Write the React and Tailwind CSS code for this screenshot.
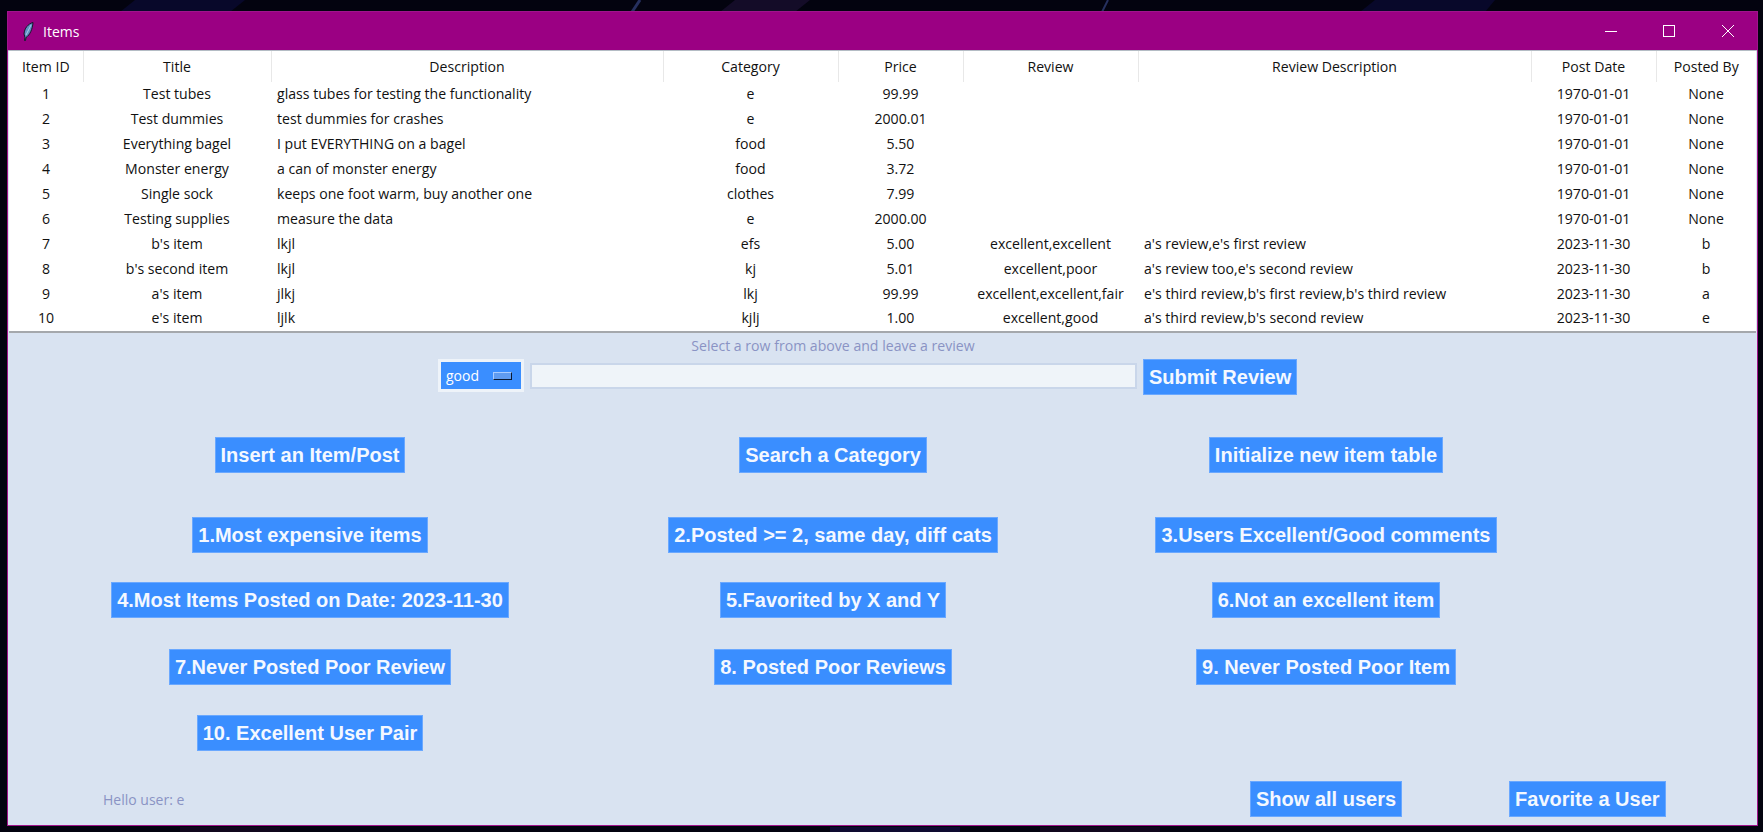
import React from 'react';

const columns = [
  { name: 'Item ID', width: 'w-[74px]' },
  { name: 'Title', width: 'w-[188px]' },
  { name: 'Description', width: 'w-[392px]' },
  { name: 'Category', width: 'w-[175px]' },
  { name: 'Price', width: 'w-[125px]' },
  { name: 'Review', width: 'w-[175px]' },
  { name: 'Review Description', width: 'w-[393px]' },
  { name: 'Post Date', width: 'w-[125px]' },
  { name: 'Posted By', width: 'w-[100px]' },
];

const rows = [
  ['1', 'Test tubes', 'glass tubes for testing the functionality', 'e', '99.99', '', '', '1970-01-01', 'None'],
  ['2', 'Test dummies', 'test dummies for crashes', 'e', '2000.01', '', '', '1970-01-01', 'None'],
  ['3', 'Everything bagel', 'I put EVERYTHING on a bagel', 'food', '5.50', '', '', '1970-01-01', 'None'],
  ['4', 'Monster energy', 'a can of monster energy', 'food', '3.72', '', '', '1970-01-01', 'None'],
  ['5', 'Single sock', 'keeps one foot warm, buy another one', 'clothes', '7.99', '', '', '1970-01-01', 'None'],
  ['6', 'Testing supplies', 'measure the data', 'e', '2000.00', '', '', '1970-01-01', 'None'],
  ['7', "b's item", 'lkjl', 'efs', '5.00', 'excellent,excellent', "a's review,e's first review", '2023-11-30', 'b'],
  ['8', "b's second item", 'lkjl', 'kj', '5.01', 'excellent,poor', "a's review too,e's second review", '2023-11-30', 'b'],
  ['9', "a's item", 'jlkj', 'lkj', '99.99', 'excellent,excellent,fair', "e's third review,b's first review,b's third review", '2023-11-30', 'a'],
  ['10', "e's item", 'ljlk', 'kjlj', '1.00', 'excellent,good', "a's third review,b's second review", '2023-11-30', 'e'],
];

const ActionButton = ({ children }) => (
  <button className="h-9 border border-[#6aa8ff] bg-[#3a8eff] px-[5px] font-['Liberation_Sans',Arial,sans-serif] text-[20px] font-bold whitespace-nowrap text-[#f4f8ff]">
    {children}
  </button>
);

const ButtonRow = ({ items, className }) => (
  <div className={`grid grid-cols-[602px_444px_542px] justify-items-center ${className}`}>
    {items.map((label, i) => (
      <div key={i} className="h-9">
        {label && <ActionButton>{label}</ActionButton>}
      </div>
    ))}
  </div>
);

const App = () => {
  return (
    <div className="relative flex h-[832px] w-[1763px] overflow-hidden bg-[#03030f] pt-[11px] pl-[7px] font-['Open_Sans',sans-serif]">
      {/* Wallpaper streaks showing round the window */}
      <svg viewBox="0 0 1763 832" className="absolute inset-0 h-full w-full" fill="none">
        <path d="M120 12L135 0h110l-15 12z" fill="#08082a" />
        <path d="M1360 12L1375 0h120l-10 12z" fill="#08082a" />
        <path d="M720 12L735 0h75l-15 12z" fill="#140c28" />
        <path d="M632 12L640 0" stroke="#26305e" strokeWidth="3" />
        <path d="M1102 12L1108 0" stroke="#26305e" strokeWidth="2" />
        <path d="M180 832h100v-5H180zM1040 832h120v-5h-120z" fill="#10061c" />
        <path d="M830 832h130v-5H830z" fill="#0e0a30" />
      </svg>

      <div className="relative flex h-[815px] w-[1751px] flex-col border border-[#a0148c] bg-[#9b0083]">
        {/* Title bar */}
        <div className="flex h-[38px] shrink-0 items-center pl-[15px] text-white">
          <svg viewBox="0 0 11 19" className="h-[19px] w-[11px]">
            <path d="M10 .5C5 2 1.500 6 1 12l1 3.500-.5 3h1l.5-3C7 13 9.500 7 10 .5z" fill="#5f8fc4" stroke="#141428" strokeWidth="1" />
            <path d="M8 3L3 13" stroke="#a9cbe8" strokeWidth="1" />
          </svg>
          <span className="ml-[9px] text-[14px]">Items</span>
          <div className="ml-auto flex items-center">
            <svg viewBox="0 0 12 12" className="h-3 w-3" fill="none" stroke="white" strokeWidth="1">
              <path d="M0 6.500h12" />
            </svg>
            <svg viewBox="0 0 12 12" className="ml-[46px] h-3 w-3" fill="none" stroke="white" strokeWidth="1">
              <rect x="0.500" y="0.500" width="11" height="11" />
            </svg>
            <svg viewBox="0 0 12 12" className="mr-[23px] ml-[47px] h-3 w-3" fill="none" stroke="white" strokeWidth="1">
              <path d="M0 0l12 12M12 0L0 12" />
            </svg>
          </div>
        </div>

        <div className="flex min-h-0 flex-1 flex-col border-t border-[#b4bcc4] bg-[#d9e3f1] pl-px">
          {/* Items table */}
          <table className="w-[1747px] table-fixed border-b-2 border-[#a5a8ac] bg-white text-[14.1px] text-[#111]">
            <thead>
              <tr className="h-[31px]">
                {columns.map((col) => (
                  <th key={col.name} className={`${col.width} border-r border-[#e8e8e8] text-center font-normal last:border-r-0`}>
                    {col.name}
                  </th>
                ))}
              </tr>
            </thead>
            <tbody>
              {rows.map((row) => (
                <tr key={row[0]} className="h-[25px]">
                  {row.map((cell, i) => (
                    <td key={i} className={`overflow-hidden pb-[2px] whitespace-nowrap ${i === 2 || i === 6 ? 'pl-[6px] text-left' : 'text-center'}`}>
                      {cell}
                    </td>
                  ))}
                </tr>
              ))}
            </tbody>
          </table>

          {/* Review form */}
          <p className="mt-[4px] ml-[602px] w-[444px] text-center text-[14.1px] leading-[18px] text-[#8a93c4]">
            Select a row from above and leave a review
          </p>
          <div className="mt-[4px] ml-[429px] flex items-center">
            <div className="mb-[3px] flex h-[33px] w-[86px] items-center border-[3px] border-[#eef3f9] bg-[#3a8eff] pl-[5px] text-[14px] text-white">
              good
              <span className="ml-[14px] h-2 w-[19px] border border-t-[#a9ccff] border-r-[#0a1a33] border-b-[#0a1a33] border-l-[#a9ccff] bg-[#5f9bf0]" />
            </div>
            <div className="mb-[2px] ml-[6px] h-[26px] w-[607px] border-2 border-[#c9d6ea] bg-[#eff4f9]" />
            <div className="ml-[6px]">
              <ActionButton>Submit Review</ActionButton>
            </div>
          </div>

          {/* Action buttons */}
          <ButtonRow className="mt-[42px]" items={['Insert an Item/Post', 'Search a Category', 'Initialize new item table']} />
          <ButtonRow className="mt-[44px]" items={['1.Most expensive items', '2.Posted >= 2, same day, diff cats', '3.Users Excellent/Good comments']} />
          <ButtonRow className="mt-[29px]" items={['4.Most Items Posted on Date: 2023-11-30', '5.Favorited by X and Y', '6.Not an excellent item']} />
          <ButtonRow className="mt-[31px]" items={['7.Never Posted Poor Review', '8. Posted Poor Reviews', '9. Never Posted Poor Item']} />
          <ButtonRow className="mt-[30px]" items={['10. Excellent User Pair', '', '']} />

          {/* Footer */}
          <div className="mt-[30px] flex items-center">
            <span className="ml-[94px] w-[100px] text-[14px] text-[#8a93c4]">Hello user: e</span>
            <div className="ml-[1047px]">
              <ActionButton>Show all users</ActionButton>
            </div>
            <div className="ml-[107px]">
              <ActionButton>Favorite a User</ActionButton>
            </div>
          </div>
        </div>
      </div>
    </div>
  );
};

export default App;
